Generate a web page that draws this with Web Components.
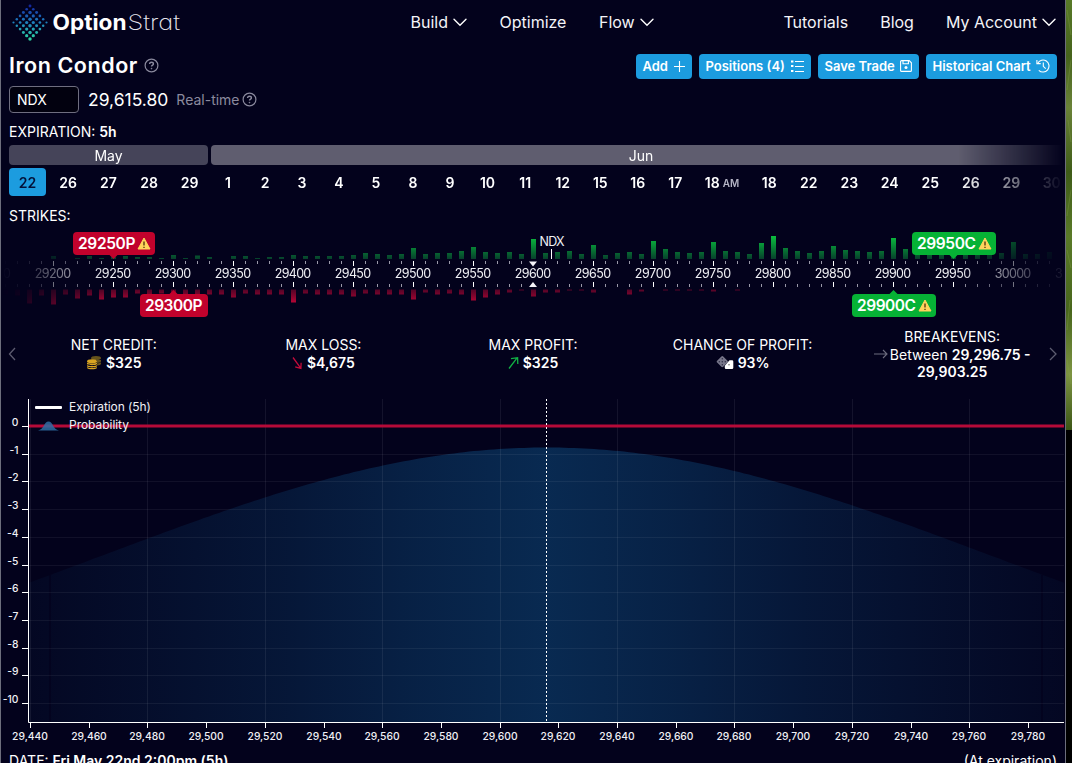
<!DOCTYPE html>
<html lang="en">
<head>
<meta charset="utf-8">
<title>Iron Condor - OptionStrat</title>
<style>
  body {
    margin: 0;
    width: 1072px;
    height: 763px;
    overflow: hidden;
    display: flex;
    background: #000;
    color: #fff;
    font-family: Inter, "Liberation Sans", sans-serif;
    --bg: #03021c;
    --blue: #1c9cdf;
    --red: #c1022c;
    --green: #06b235;
  }
</style>
</head>
<body>
<strategy-page>
  <site-header slot="header"></site-header>
  <title-bar slot="title" name="Iron Condor">
    <action-button width="56" icon="plus">Add</action-button>
    <action-button width="112" icon="list">Positions (4)</action-button>
    <action-button width="101" icon="save">Save Trade</action-button>
    <action-button width="131" icon="history">Historical Chart</action-button>
  </title-bar>
  <ticker-row slot="ticker"></ticker-row>
  <expiration-picker></expiration-picker>
  <strike-ruler></strike-ruler>
  <stat-strip>
    <stat-item label="NET CREDIT:" icon="coins"><b>$325</b></stat-item>
    <stat-item label="MAX LOSS:" icon="down"><b>$4,675</b></stat-item>
    <stat-item label="MAX PROFIT:" icon="up"><b>$325</b></stat-item>
    <stat-item label="CHANCE OF PROFIT:" icon="dice"><b>93%</b></stat-item>
    <stat-item label="BREAKEVENS:" icon="right">Between <b>29,296.75 -<br>29,903.25</b></stat-item>
  </stat-strip>
  <payoff-chart></payoff-chart>
  <date-footer></date-footer>
</strategy-page>
<desktop-edge></desktop-edge>

<script>
const ICONS = {
  chevron: '<svg width="14" height="9" viewBox="0 0 14 9"><path d="M1 1.2l6 6 6-6" fill="none" stroke="#fff" stroke-width="1.4" stroke-linecap="round"/></svg>',
  help: '<svg width="15" height="15" viewBox="0 0 15 15" fill="none" stroke="#8b8a9e" stroke-width="1.2"><circle cx="7.5" cy="7.5" r="6.4"/><path d="M5.6 6c0-1.2.8-1.8 1.9-1.8s1.9.7 1.9 1.7c0 1.2-1.9 1.3-1.9 2.7" stroke-width="1.4"/><circle cx="7.5" cy="10.6" r=".5" fill="#8b8a9e" stroke-width=".6"/></svg>',
  plus: '<svg width="11" height="11" viewBox="0 0 11 11"><path d="M5.5 0v11M0 5.5h11" stroke="#fff" stroke-width="1.1"/></svg>',
  list: '<svg width="13" height="12" viewBox="0 0 13 12"><path d="M4 1.500h9M4 6.500h9M4 11.500h9" stroke="#fff" stroke-width="1"/><path d="M0 1.500h2.400M0 6h2.400M0 11h2.400" stroke="#fff" stroke-width="1.900"/></svg>',
  save: '<svg width="12" height="12" viewBox="0 0 12 12" fill="none" stroke="#fff" stroke-width="1.1"><path d="M1.6.6h7.6l2.2 2.2v7.6a1 1 0 0 1-1 1H1.6a1 1 0 0 1-1-1V1.6a1 1 0 0 1 1-1z"/><path d="M3 .6v3.2h5.4V.6"/><circle cx="6" cy="7.6" r="1.5" fill="#fff" stroke="none"/></svg>',
  history: '<svg width="14" height="14" viewBox="0 0 14 14" fill="none" stroke="#fff" stroke-width="1.1"><path d="M1.7 4.2A6 6 0 1 1 2.8 11.3"/><path d="M.9 1v3.6h3.8M7.3 3.6v3.7l2.4 2.3"/></svg>',
  coins: '<svg width="16" height="15" viewBox="0 0 16 15"><g fill="#66531c"><ellipse cx="10" cy="3" rx="5" ry="2"/><path d="M11 5h4v1.3c0 1-2 1.6-4 1.7zM11 8.5c2 0 3.5-.5 4-1.2v1.5c0 1-2 1.6-4 1.7z"/></g><g fill="#d9a521"><ellipse cx="6" cy="6.3" rx="5" ry="2"/><path d="M1 7.5c1 1.4 9 1.4 10 0v1.6c-1 1.6-9 1.6-10 0zM1 10c1 1.4 9 1.4 10 0v1.2c-1 1.6-9 1.6-10 0zM1 12c1 1.4 9 1.4 10 0v1c-1 1.8-9 1.8-10 0z"/></g></svg>',
  down: '<svg width="11" height="14" viewBox="0 0 11 14"><path d="M1 1.5l7.5 10.3M9.1 6.7l-.2 5.8-5.7-1.6" fill="none" stroke="#c30c3c" stroke-width="1.3"/></svg>',
  up: '<svg width="11" height="14" viewBox="0 0 11 14"><path d="M1 12.5L8.9 2.2M3 2.7l6.6-1 .2 6.2" fill="none" stroke="#11b145" stroke-width="1.3"/></svg>',
  dice: '<svg width="18" height="14" viewBox="0 0 18 14"><rect x="2" y="1.4" width="8.6" height="8.6" rx="1.3" transform="rotate(45 6.3 5.7)" fill="#77768a"/><g fill="#2b2a42"><circle cx="6.3" cy="2.7" r=".7"/><circle cx="3.3" cy="5.7" r=".7"/><circle cx="6.3" cy="5.7" r=".7"/><circle cx="9.3" cy="5.7" r=".7"/><circle cx="6.3" cy="8.7" r=".7"/></g><path d="M13.5 4.2H16a1.3 1.3 0 0 1 1.3 1.3v6.3a1.3 1.3 0 0 1-1.3 1.3h-6a1.3 1.3 0 0 1-1.2-1.3v-2.1z" fill="#fff"/><circle cx="13" cy="8.8" r=".7" fill="#555"/></svg>',
  right: '<svg width="14" height="10" viewBox="0 0 14 10"><path d="M0 5h13M9 1l4 4-4 4" fill="none" stroke="#6d6c7e" stroke-width="1.1"/></svg>'
};

function define(name, render) {
  customElements.define(name, class extends HTMLElement {
    connectedCallback() {
      this.attachShadow({ mode: 'open' }).innerHTML = render(this);
    }
  });
}

define('strategy-page', () => `
  <style>
    :host {
      box-sizing: border-box;
      flex: none;
      display: block;
      width: 1066px;
      height: 763px;
      overflow: hidden;
      background: var(--bg);
      border-left: 1px solid #6d6e7c;
      border-right: 1px solid #6d6e7c;
    }
  </style>
  <slot name="header"></slot>
  <slot name="title"></slot>
  <slot name="ticker"></slot>
  <slot></slot>`);

// strip of wallpaper visible to the right of the window
define('desktop-edge', () => `
  <style>
    :host { display: block; flex: 1; height: 430px; background: #4c6a22; }
    svg { display: block; }
  </style>
  <svg width="6" height="430">
    <defs><linearGradient id="g" x2="0" y2="1">
      <stop offset="0" stop-color="#587a28"/><stop offset=".13" stop-color="#46631c"/>
      <stop offset=".25" stop-color="#6a8238"/><stop offset=".4" stop-color="#3f5c18"/>
      <stop offset=".55" stop-color="#5a7a28"/><stop offset=".72" stop-color="#48661c"/>
      <stop offset=".87" stop-color="#7d9442"/><stop offset="1" stop-color="#3c5616"/>
    </linearGradient></defs>
    <rect width="6" height="430" fill="url(#g)"/>
    <path d="M1 10l4 25M5 60l-4 30M2 120l3 22M5 190l-4 26M1 250l4 18M4 300l-3 30M1 360l4 24" stroke="#88a34a" stroke-opacity=".35"/>
  </svg>`);

function logoDots() {
  let out = '';
  for (let i = 0; i < 6; i++) {
    for (let j = 0; j < 6; j++) {
      const t = (i + j) / 10;
      const x = 18 + (i - j) * 3.3;
      const y = 2 + (i + j) * 3.3;
      const r = 1.75 - Math.abs(i - j) * 0.13 - (t < 0.2 ? 0.3 : 0);
      const c = t < 0.5
        ? [20 + t * 20, 40 + t * 180, 160 + t * 60]
        : [30 + (t - 0.5) * 30, 130 + (t - 0.5) * 160, 190 - (t - 0.5) * 60];
      out += `<circle cx="${x}" cy="${y}" r="${r.toFixed(2)}" fill="rgb(${c.map(Math.round)})"/>`;
    }
  }
  return out;
}

define('site-header', () => `
  <style>
    :host { display: flex; height: 44px; align-items: center; box-sizing: border-box; padding: 0 9px 0 11px; font-size: 16px; line-height: 20px; }
    .logo { flex: none; display: block; margin-top: 1px; }
    nav { display: flex; gap: 32.500px; }
    .main { margin-left: 224.500px; }
    .user { margin-left: auto; }
    .user { gap: 32px; }
    nav span { display: flex; align-items: center; gap: 5px; color: #f4f4f8; }
  </style>
  <svg class="logo" width="174" height="38">
    ${logoDots()}
    <text x="40.500" y="26" font-family="Inter" font-size="21" font-weight="700" fill="#fff" textLength="74" lengthAdjust="spacingAndGlyphs">Option</text>
    <text x="115.500" y="26" font-family="Inter" font-size="21" font-weight="200" fill="#e6e6ee" textLength="52.500" lengthAdjust="spacingAndGlyphs" style="font-feature-settings:'cv11'">Strat</text>
  </svg>
  <nav class="main"><span>Build ${ICONS.chevron}</span><span>Optimize</span><span>Flow ${ICONS.chevron}</span></nav>
  <nav class="user"><span>Tutorials</span><span>Blog</span><span>My Account ${ICONS.chevron}</span></nav>`);

define('title-bar', el => `
  <style>
    :host { display: flex; height: 42px; align-items: center; padding: 0 8px; }
    h1 { margin: 0 6px 0 0; font-size: 21.500px; font-weight: 600; line-height: 26px; letter-spacing: .55px; }
    .actions { display: flex; gap: 7px; margin-left: auto; padding-top: 3px; }
  </style>
  <h1>${el.getAttribute('name')}</h1>${ICONS.help}
  <div class="actions"><slot></slot></div>`);

define('action-button', el => `
  <style>
    :host { display: block; width: ${el.getAttribute('width')}px; }
    button {
      box-sizing: border-box; width: 100%; height: 25px; padding: 0 7px 1px 6.500px;
      display: flex; align-items: center; justify-content: space-between;
      border: 0; border-radius: 4px; background: var(--blue); color: #fff;
      font: 600 13px/16px Inter, sans-serif; white-space: nowrap;
    }
  </style>
  <button><span><slot></slot></span>${ICONS[el.getAttribute('icon')]}</button>`);

define('ticker-row', () => `
  <style>
    :host { display: flex; height: 27px; align-items: center; padding-left: 8px; }
    .symbol { box-sizing: border-box; width: 70px; height: 27px; padding-left: 7px; border: 1px solid #6f6e80; border-radius: 4px; background: #02010f; font-size: 14px; line-height: 26px; }
    .price { margin-left: 9px; font-size: 17.500px; }
    .live { margin: 0 2px 0 8px; font-size: 14px; color: #8b8a9e; }
    svg { margin-top: -1px; }
  </style>
  <div class="symbol">NDX</div>
  <span class="price">29,615.80</span>
  <span class="live">Real-time</span>${ICONS.help}`);

const MAY = [['22', 37, 'on'], ['26', 37], ['27', 37], ['28', 37], ['29', 37]];
const JUN = [['1', 34], ['2', 34], ['3', 34], ['4', 34], ['5', 34], ['8', 34], ['9', 34],
  ['10', 35], ['11', 34.5], ['12', 34.5], ['15', 34.5], ['16', 34.5], ['17', 34.5], ['18<small>AM</small>', 53],
  ['18', 35.5], ['22', 37.5], ['23', 37.5], ['24', 37.5], ['25', 37.5], ['26', 37.5], ['29', 37.5], ['30', 37.5]];

function month(name, cls, days) {
  return `<section class="${cls}"><h2>${name}</h2><div class="days">` +
    days.map(d => `<span class="${d[2] || ''}" style="width:${d[1]}px">${d[0]}</span>`).join('') +
    '</div></section>';
}

define('expiration-picker', () => `
  <style>
    :host { display: block; height: 83px; }
    .label { height: 26px; padding: 6px 0 0 8px; font-size: 14px; line-height: 26px; }
    .label b { font-weight: 600; }
    .months {
      display: flex; gap: 3px; height: 51px; padding-left: 8px; overflow: hidden;
      -webkit-mask: linear-gradient(90deg, #000 957px, transparent 1063px);
      mask: linear-gradient(90deg, #000 957px, transparent 1063px);
    }
    section { flex: none; }
    .may { width: 199px; }
    .jun { width: 860px; }
    h2 { margin: 0 0 3px; height: 20px; border-radius: 4px; background: #454459; text-align: center; font-size: 14px; line-height: 22px; font-weight: 400; }
    .jun h2 { background: #5f5d6f; }
    .days { display: flex; gap: 3px; }
    .may .days { gap: 3.500px; }
    .days span { flex: none; height: 28px; text-align: center; font-size: 14px; line-height: 30px; font-weight: 600; }
    .days .on { background: var(--blue); color: #03123a; border-radius: 4px; }
    small { margin-left: 3px; font-size: 10px; vertical-align: 1px; color: #b4b4c4; }
  </style>
  <div class="label">EXPIRATION: <b>5h</b></div>
  <div class="months">${month('May', 'may', MAY)}${month('Jun', 'jun', JUN)}</div>`);

// open interest per strike, ten points apart; the first entry is 29160
const CALLS = [0, 0, 0, 0, 3, 0, 1, 3, 1, 2, 3, 2, 2, 1, 4, 1, 3.5, 2, 0, 3, 3, 1, 2, 2, 4, 3, 3, 3, 3, 4,
  6, 5, 4, 5, 11, 5, 6, 6, 8, 12, 7, 6, 7, 5, 20, 6, 7, 8, 5, 14, 4, 6, 7, 5, 18, 10, 7, 6, 7, 17,
  8, 7, 5, 16, 23, 11, 8, 6, 8, 13, 9, 8, 7, 8, 21, 10, 6, 6, 7, 8, 8, 8, 6, 6, 17, 5, 5, 7];
const PUTS = [5, 6, 14, 6, 15, 5, 9, 6, 10, 8, 8, 4, 5, 4, 4, 5, 5, 5, 5, 8, 4, 5, 5, 5, 13, 4, 5, 5, 5, 7,
  4, 5, 5, 5, 10, 3, 5, 4, 5, 11, 8, 5, 3, 1, 7, 3, 3, 1, 1, 3, 0, 0, 5, 2, 0, 1, 1, 1, 1, 2,
  0, 1, 0, 0, 0, 0, 0, 0, 0, 0, 0, 0, 0, 0, 0, 0, 0, 0, 0, 0, 0, 0, 0, 0, 0, 0, 0, 0];

function rulerMarks() {
  let out = '';
  for (let i = 0; i < CALLS.length; i++) {
    const x = 2 + i * 12;
    const major = (i - 4) % 5 === 0;
    if (CALLS[i]) out += `<rect x="${x}" y="${34 - CALLS[i]}" width="5" height="${CALLS[i]}" fill="url(#call)"/>`;
    if (PUTS[i]) out += `<rect x="${x}" y="64.500" width="5" height="${PUTS[i]}" fill="url(#put)"/>`;
    const color = major ? '#fff' : '#9a99a9';
    if (i !== 44) {
      out += `<rect x="${x + 2}" y="36" width="1" height="${major ? 5 : 3}" fill="${color}"/>` +
        `<rect x="${x + 2}" y="${major ? 57 : 59}" width="1" height="${major ? 5 : 3}" fill="${color}"/>`;
    }
    if (major) out += `<text x="${x + 2}" y="53" text-anchor="middle" textLength="36.500">${29160 + i * 10}</text>`;
  }
  return out;
}

function warning(x, y) {
  return `<path d="M${x + 6.5} ${y}l6 11h-12z" fill="#ffd35c" stroke="#ffd35c" stroke-linejoin="round"/>
    <path d="M${x + 6.5} ${y + 3.5}v4M${x + 6.5} ${y + 8.8}v1.300" stroke="#5a3a10" stroke-width="1.400"/>`;
}

function legTag(text, x, y, width, tip, color, warn) {
  const arrow = y < 40
    ? `M${tip - 4.5} ${y + 22.5}l4.500 4.500 4.500-4.500z`
    : `M${tip - 4.5} ${y + .5}l4.500-4.500 4.500 4.500z`;
  return `<rect x="${x}" y="${y}" width="${width}" height="23" rx="4" fill="${color}"/><path d="${arrow}" fill="${color}"/>
    <text class="leg" x="${x + 5}" y="${y + 17}" textLength="${text.endsWith('C') ? 59 : 57.5}">${text}</text>
    ${warn ? warning(x + width - 17.5, y + 6) : ''}`;
}

define('strike-ruler', () => `
  <style>
    :host { display: block; height: 129px; }
    .label { height: 18px; padding: 11px 0 0 8px; font-size: 14px; line-height: 18px; }
    svg { display: block; font-family: Inter, sans-serif; }
    .scale { -webkit-mask: linear-gradient(90deg, transparent, #000 105px, #000 955px, transparent 1060px); mask: linear-gradient(90deg, transparent, #000 105px, #000 955px, transparent 1060px); }
    text { font-size: 12.500px; fill: #f0f0f5; }
    .leg { font-size: 15.500px; font-weight: 600; fill: #fff; }
  </style>
  <div class="label">STRIKES:</div>
  <svg width="1064" height="100">
    <defs>
      <linearGradient id="call" gradientUnits="userSpaceOnUse" x1="0" y1="11" x2="0" y2="34">
        <stop offset="0" stop-color="#0cbd3e"/><stop offset=".4" stop-color="#078f37"/><stop offset="1" stop-color="#07402c"/>
      </linearGradient>
      <linearGradient id="put" gradientUnits="userSpaceOnUse" x1="0" y1="64" x2="0" y2="78">
        <stop offset="0" stop-color="#4f0426"/><stop offset="1" stop-color="#b90535"/>
      </linearGradient>
      <linearGradient id="fade" gradientUnits="userSpaceOnUse" x1="0" y1="0" x2="1064" y2="0">
        <stop offset="0" stop-color="#000"/><stop offset=".022" stop-color="#222"/><stop offset=".1" stop-color="#fff"/>
        <stop offset=".897" stop-color="#fff"/><stop offset=".98" stop-color="#2a2a2a"/><stop offset="1" stop-color="#111"/>
      </linearGradient>
      <mask id="edges" maskUnits="userSpaceOnUse" x="0" y="0" width="1064" height="100"><rect width="1064" height="100" fill="url(#fade)"/></mask>
    </defs>
    <g mask="url(#edges)">${rulerMarks()}<text x="2" y="53">0</text><text x="1054" y="53">3</text></g>
    <path d="M528 36.500h8l-4 5zM528 62l4-5 4 5z" fill="#f4f4f8"/>
    <text x="538.500" y="21" textLength="25">NDX</text>
    <rect x="550" y="24" width="1" height="10" fill="#fff"/>
    ${legTag('29250P', 72, 7, 82, 112.5, 'var(--red)', true)}
    ${legTag('29300P', 139, 69, 68, 172.5, 'var(--red)', false)}
    ${legTag('29950C', 911, 7, 84, 952.5, 'var(--green)', true)}
    ${legTag('29900C', 851, 69, 84, 892.5, 'var(--green)', true)}
  </svg>`);

define('stat-strip', () => `
  <style>
    :host { display: grid; grid-template-columns: 8px 1fr 8px; align-items: center; height: 58px; }
    .items { display: grid; grid-template-columns: repeat(5, 1fr); align-items: center; }
    svg { display: block; }
    .next { margin-left: -9px; }
  </style>
  <svg width="16" height="14" viewBox="0 0 16 14"><path d="M14 1L8.500 7l5.500 6" fill="none" stroke="#5d5c70" stroke-width="1.300"/></svg>
  <div class="items"><slot></slot></div>
  <svg class="next" width="12" height="14" viewBox="0 0 12 14"><path d="M2 1l6 6-6 6" fill="none" stroke="#5d5c70" stroke-width="1.300"/></svg>`);

define('stat-item', el => `
  <style>
    :host { display: block; text-align: center; font-size: 14px; line-height: 18px; white-space: nowrap; }
    svg { vertical-align: -2px; margin-right: 4px; }
    .right { line-height: 17px; }
    .right svg { vertical-align: 1px; margin-right: 2px; }
    ::slotted(b) { font-weight: 600; }
  </style>
  <div>${el.getAttribute('label')}</div>
  <div class="${el.getAttribute('icon')}">${ICONS[el.getAttribute('icon')]}<slot></slot></div>`);

const CHART_TOP = 383;
const MID = 545.5;

function probabilityArea() {
  let d = 'M28 339';
  for (let x = 28; x <= 1063; x += 5) {
    const y = 447.5 - CHART_TOP + 274 * (1 - Math.exp(-((x - MID) ** 2) / (2 * 443.6 ** 2)));
    d += `L${x} ${y.toFixed(1)}`;
  }
  return d + 'V339z';
}

function chartAxes() {
  let out = '';
  for (let v = 0; v <= 10; v++) {
    const y = Math.round(43 + v * 27.7);
    out += `<path d="M28 ${y + .5}H1063" stroke="#fff" stroke-opacity=".06"/>
      <rect x="21" y="${y}" width="6" height="1" fill="#fff"/>
      <text x="17.500" y="${y}" text-anchor="end">${v ? '-' + v : 0}</text>`;
  }
  for (let i = 0; i <= 17; i++) {
    const x = Math.round(29 + i * 58.7);
    if (i % 2 === 0) out += `<path d="M${x + .5} 16V339" stroke="#fff" stroke-opacity=".07"/>`;
    out += `<rect x="${x}" y="340" width="1" height="5" fill="#fff"/>
      <text x="${x}" y="357" text-anchor="middle">${(29440 + i * 20).toLocaleString('en-US')}</text>`;
  }
  return out;
}

define('payoff-chart', () => `
  <style>
    :host { display: block; height: 369px; }
    svg { display: block; font-family: Inter, sans-serif; }
    text { font-size: 10.300px; font-weight: 500; fill: #f0f0f5; }
    .legend { font-size: 12px; font-weight: 400; }
  </style>
  <svg width="1064" height="369">
    <defs><linearGradient id="prob">
      <stop offset="0" stop-color="#0a3560" stop-opacity=".1"/>
      <stop offset=".12" stop-color="#0a3560" stop-opacity=".24"/>
      <stop offset=".25" stop-color="#0a3560" stop-opacity=".41"/>
      <stop offset=".38" stop-color="#0a3560" stop-opacity=".62"/>
      <stop offset=".5" stop-color="#0a3560" stop-opacity=".78"/>
      <stop offset=".62" stop-color="#0a3560" stop-opacity=".62"/>
      <stop offset=".75" stop-color="#0a3560" stop-opacity=".41"/>
      <stop offset=".88" stop-color="#0a3560" stop-opacity=".24"/>
      <stop offset="1" stop-color="#0a3560" stop-opacity=".1"/>
    </linearGradient></defs>
    <path d="${probabilityArea()}" fill="url(#prob)"/>
    <path d="M49 192V339M1041 192V339" stroke="#03021c" stroke-opacity=".85" stroke-width="1.500"/>
    ${chartAxes()}
    <path d="M28 43H1063" stroke="#b50a38" stroke-width="3"/>
    <path d="M27.500 16V339.500H1063" fill="none" stroke="#fff"/>
    <path d="M545.500 16V339" stroke="#fff" stroke-dasharray="2 2"/>
    <rect x="34" y="23" width="27" height="3" rx="1" fill="#fff"/>
    <path d="M37 47.500c6-1 6-9 10.500-9s4.500 8 10.500 9z" fill="#2f6ea3" fill-opacity=".85"/>
    <text class="legend" x="68" y="28" textLength="82">Expiration (5h)</text>
    <text class="legend" x="68" y="46" textLength="60">Probability</text>
  </svg>`);

define('date-footer', () => `
  <style>
    :host { display: flex; justify-content: space-between; padding: 0 8px; font-size: 14px; line-height: 18px; }
    b { font-weight: 600; }
  </style>
  <span>DATE: <b>Fri May 22nd 2:00pm (5h)</b></span><span>(At expiration)</span>`);
</script>
</body>
</html>
